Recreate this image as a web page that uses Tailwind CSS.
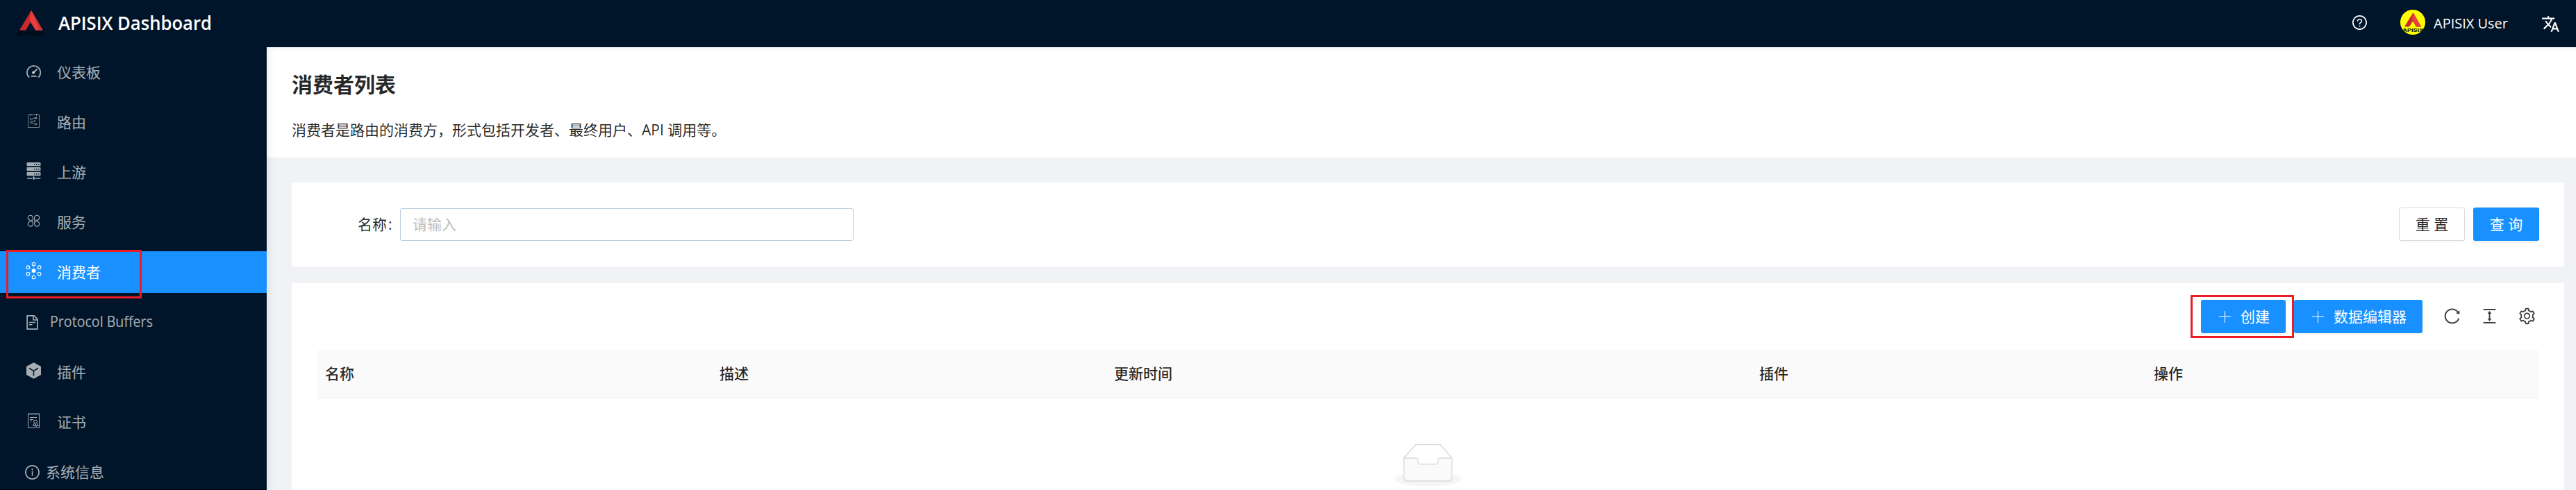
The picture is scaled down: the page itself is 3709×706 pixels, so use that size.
<!DOCTYPE html>
<html lang="zh-CN">
<head>
<meta charset="utf-8">
<title>APISIX Dashboard</title>
<script src="https://cdn.jsdelivr.net/npm/@tailwindcss/browser@4"></script>
</head>
<body class="relative flex h-[706px] w-[3709px] flex-col overflow-hidden bg-[#f0f2f5] font-['Open_Sans','Noto_Sans_CJK_SC',sans-serif] text-[21px] leading-[33px] text-black/85">

<header class="z-10 flex h-[68px] shrink-0 items-center bg-[#001529] text-white">
  <svg class="mb-[2px] ml-6 h-10 w-[42px] shrink-0" viewBox="0 0 42 40">
    <path d="M21 2L37.500 30.500H27L20 19L13 30.500H4z" fill="#c9292f"/>
    <path d="M21 2L37.500 30.500H27.500L18.500 15.500z" fill="#e8403a"/>
    <path d="M21 2L37.500 30.500H32z" fill="#d13438"/>
    <text x="1" y="37.500" font-family="Inter" font-weight="800" font-size="7" textLength="39" lengthAdjust="spacingAndGlyphs" fill="#03080f">APISIX</text>
  </svg>
  <svg class="ml-[18px] h-[68px] w-[230px]" viewBox="0 0 230 68"><text x="0" y="43" font-family="Open Sans" font-weight="600" font-size="26.500" textLength="221" lengthAdjust="spacingAndGlyphs" fill="#fff">APISIX Dashboard</text></svg>
  <div class="ml-auto flex items-center pr-[23px]">
    <svg class="mr-[48px] mb-[3px] size-[21px]" viewBox="64 64 896 896" fill="currentColor"><path d="M512 64C264.600 64 64 264.600 64 512s200.600 448 448 448 448-200.600 448-448S759.400 64 512 64zm0 820c-205.400 0-372-166.600-372-372s166.600-372 372-372 372 166.600 372 372-166.600 372-372 372z"/><path d="M623.600 316.700C593.600 290.400 554 276 512 276s-81.600 14.500-111.600 40.700C369.200 344 352 380.700 352 420v7.600c0 4.400 3.600 8 8 8h48c4.400 0 8-3.600 8-8V420c0-44.100 43.100-80 96-80s96 35.900 96 80c0 31.100-22 59.600-56.100 72.700-21.200 8.100-39.200 22.300-52.100 40.900-13.100 19-19.900 41.800-19.900 64.900V620c0 4.400 3.600 8 8 8h48c4.400 0 8-3.600 8-8v-22.700a48.300 48.300 0 0130.900-44.800c59-22.700 97.100-74.700 97.100-132.500.1-39.300-17.100-76-48.300-103.300zM472 732a40 40 0 1080 0 40 40 0 10-80 0z"/></svg>
    <svg class="mr-3 mb-1 size-9 rounded-full bg-[#ffff00]" viewBox="0 0 36 36">
      <path d="M18.500 4L30 24.500H23L18 16.500L13 24.500H6z" fill="#c9292f"/>
      <path d="M18.500 4L30 24.500H23.500L16.800 13.500z" fill="#e8403a"/>
      <text x="3" y="31.500" font-family="Inter" font-weight="800" font-size="6" textLength="31" lengthAdjust="spacingAndGlyphs" fill="#2b2b10">APISIX</text>
    </svg>
    <svg class="h-[68px] w-[110px]" viewBox="0 0 110 68"><text x="0" y="41" font-family="Open Sans" font-size="20.500" textLength="107" lengthAdjust="spacingAndGlyphs" fill="#fff">APISIX User</text></svg>
    <svg class="ml-[45px] size-[27px]" viewBox="0 0 24 24" fill="currentColor"><path d="M12.870 15.070l-2.540-2.510.03-.03c1.740-1.940 2.980-4.170 3.710-6.530H17V4h-7V2H8v2H1v1.990h11.170C11.500 7.920 10.440 9.750 9 11.350 8.070 10.320 7.300 9.190 6.690 8h-2c.73 1.630 1.730 3.170 2.980 4.560l-5.090 5.020L4 19l5-5 3.110 3.110.76-2.040zM18.500 10h-2L12 22h2l1.120-3h4.750L21 22h2l-4.500-12zm-2.620 7l1.620-4.330L19.120 17h-3.240z"/></svg>
  </div>
</header>

<div class="flex min-h-0 flex-1">
  <aside class="relative z-[5] w-96 shrink-0 overflow-hidden bg-[#001529] pt-1.5 text-white/65 shadow-[3px_0_12px_rgba(29,35,41,0.08)]">
    <nav class="flex flex-col gap-3 leading-[60px]">
      <a class="flex h-[60px] items-center pl-9">
        <svg class="mr-[21px] mb-1 h-[22px] w-[25px]" viewBox="0 0 25 22" fill="none" stroke="currentColor" stroke-width="1.800"><path d="M6.500 19.800H5.200A9.700 9.700 0 1 1 20 19.800H18.500"/><path d="M9 18.800h7.500" stroke-width="2"/><path d="M12 13.800L17.500 8.500" stroke-width="2"/><circle cx="12" cy="13.500" r="1.600" fill="currentColor" stroke-width="1"/></svg>仪表板</a>
      <a class="flex h-[60px] items-center pl-9">
        <svg class="mr-[21px] mb-1 h-[22px] w-[25px]" viewBox="0 0 25 22" fill="none" stroke="currentColor"><path d="M4.500 2.500H20.500V20.500H4.500z" stroke-opacity=".75"/><path d="M8.500 1v2.500M16.500 1v2.500"/><path d="M7.500 8.500H11L13 7H15.500M7.500 11.500H14M7.500 14H10.500L14 16H16" stroke-width=".9"/><path d="M15 6h2v2h-2zM13.500 10.500h1.600v1.600h-1.600zM15.500 15h1.600v1.800h-1.600zM7 7.500h1.300v1.600H7z" fill="currentColor" stroke="none"/></svg>路由</a>
      <a class="flex h-[60px] items-center pl-9">
        <svg class="mr-[21px] mb-[5px] h-[26px] w-[25px]" viewBox="0 0 25 26"><g fill="currentColor"><rect x="2.500" y="1" width="20" height="5.200" rx="1"/><rect x="2.500" y="8" width="20" height="5.200" rx="1"/><rect x="2.500" y="15" width="20" height="5.200" rx="1"/><path d="M3 23.200h7v1.500H3zM15 23.200h7.300v1.500H15zM12 20.200h1v2h-1zM11 22.200h3.200v3.200H11z"/></g><path d="M13 3h1.500v1.500H13zM16 3h1.500v1.500H16zM19 3h1.500v1.500H19zM13 10h1.500v1.500H13zM16 10h1.500v1.500H16zM19 10h1.500v1.500H19zM13 17h1.500v1.500H13zM16 17h1.500v1.500H16zM19 17h1.500v1.500H19z" fill="#001529"/></svg>上游</a>
      <a class="flex h-[60px] items-center pl-9">
        <svg class="mr-[21px] mb-1 h-[22px] w-[25px]" viewBox="0 0 25 22" fill="none" stroke="currentColor" stroke-width="1.150"><path d="M11.300 10.200H8.300A3.500 3.500 0 1 1 11.300 6.700z"/><path d="M13.700 10.200H16.700A3.500 3.500 0 1 0 13.700 6.700zM11.300 12.200H8.300A3.500 3.500 0 1 0 11.300 15.700zM13.700 12.200H16.700A3.500 3.500 0 1 1 13.700 15.700z"/></svg>服务</a>
      <a class="flex h-[60px] items-center bg-[#1890ff] pl-9 text-white">
        <svg class="mr-[21px] mb-1 h-[26px] w-[25px]" viewBox="0 0 25 26" fill="none" stroke="currentColor" stroke-width="1.100"><circle cx="12.500" cy="13" r="2.900" fill="currentColor" stroke="none"/><circle cx="12.500" cy="3.500" r="2.300"/><circle cx="12.500" cy="22.500" r="2.300"/><circle cx="4.300" cy="8.200" r="2.300"/><circle cx="20.700" cy="8.200" r="2.300"/><circle cx="4.300" cy="17.800" r="2.300"/><circle cx="20.700" cy="17.800" r="2.300"/><path d="M12.500 6V8M12.500 18v2M6.500 9.500L9 11M18.500 9.500L16 11M6.500 16.500L9 15M18.500 16.500L16 15" stroke-width=".7" stroke-opacity=".7"/></svg>消费者</a>
      <a class="flex h-[60px] items-center pl-9">
        <svg class="mr-[15px] size-[21px]" viewBox="64 64 896 896" fill="currentColor"><path d="M854.600 288.600L639.400 73.400c-6-6-14.100-9.400-22.600-9.400H192c-17.700 0-32 14.300-32 32v832c0 17.700 14.300 32 32 32h640c17.700 0 32-14.300 32-32V311.300c0-8.500-3.400-16.700-9.400-22.700zM790.200 326H602V137.800L790.200 326zm1.800 562H232V136h302v216a42 42 0 0042 42h216v494zM504 618H320c-4.400 0-8 3.600-8 8v48c0 4.400 3.600 8 8 8h184c4.400 0 8-3.600 8-8v-48c0-4.400-3.600-8-8-8zM312 490v48c0 4.400 3.600 8 8 8h384c4.400 0 8-3.600 8-8v-48c0-4.400-3.600-8-8-8H320c-4.400 0-8 3.600-8 8z"/></svg>
        <svg class="h-[60px] w-[160px]" viewBox="0 0 160 60" fill="currentColor"><text x="0" y="37" font-family="Open Sans" font-size="21" textLength="148" lengthAdjust="spacingAndGlyphs">Protocol Buffers</text></svg></a>
      <a class="flex h-[60px] items-center pl-9">
        <svg class="mr-[21px] mb-1 h-[26px] w-[25px]" viewBox="0 0 25 26"><path d="M12.500 1.200L23 7V19L12.500 24.800L2 19V7z" fill="currentColor" stroke-linejoin="round"/><path d="M6 9.500L12.500 13.300L19 9.500M12.500 13.300V20.500" fill="none" stroke="#001529" stroke-width="1.500"/></svg>插件</a>
      <a class="flex h-[60px] items-center pl-9">
        <svg class="mr-[21px] mb-[5px] h-[22px] w-[25px]" viewBox="0 0 25 22" fill="none" stroke="currentColor"><path d="M4.500 1H20.500V21.300H4.500z"/><path d="M5 2h15" stroke-opacity=".5"/><path d="M7 6.500H17M7 9.500H12M7 11.500H10"/><circle cx="15" cy="12.500" r="2.400"/><path d="M13.500 14.500L11.500 18.500L13.500 18L14.500 19.500L15.300 16L16.500 19.500L17.500 18L19.300 18.500L17 14.500"/></svg>证书</a>
      <a class="flex h-[60px] items-center pl-9">
        <svg class="mr-[9px] size-[21px]" viewBox="64 64 896 896" fill="currentColor"><path d="M512 64C264.600 64 64 264.600 64 512s200.600 448 448 448 448-200.600 448-448S759.400 64 512 64zm0 820c-205.400 0-372-166.600-372-372s166.600-372 372-372 372 166.600 372 372-166.600 372-372 372z"/><path d="M464 336a48 48 0 1096 0 48 48 0 10-96 0zm72 112h-48c-4.400 0-8 3.600-8 8v272c0 4.400 3.600 8 8 8h48c4.400 0 8-3.600 8-8V456c0-4.400-3.600-8-8-8z"/></svg>系统信息</a>
    </nav>
    <div class="absolute inset-x-0 bottom-0 h-px bg-black/50"></div>
  </aside>

  <main class="flex min-w-0 flex-1 flex-col">
    <div class="h-[159px] shrink-0 bg-white pl-9 shadow-[inset_0_6px_6px_-5px_rgba(0,21,41,0.08)]">
      <h1 class="pt-[30px] text-[30px] leading-[48px] font-bold">消费者列表</h1>
      <p class="pt-[25px] leading-[33px]">消费者是路由的消费方，形式包括开发者、最终用户、API 调用等。</p>
    </div>

    <section class="mt-9 mr-[17px] ml-9 flex h-[121px] shrink-0 items-start bg-white pt-9 pr-9 pl-[95px]">
      <label class="w-[61px] leading-[49px] whitespace-nowrap">名称<span class="ml-[2px]">:</span></label>
      <div class="mt-px flex h-[47px] w-[653px] items-center rounded-[3px] border border-[#b9cfe2] pl-[17px] text-[#bfbfbf]">请输入</div>
      <div class="ml-auto flex gap-3">
        <button class="flex h-12 w-[95px] items-center justify-center rounded-[3px] border border-[#d9d9d9] shadow-[0_3px_0_rgba(0,0,0,0.02)]">重 置</button>
        <button class="flex h-12 w-[95px] items-center justify-center rounded-[3px] bg-[#1890ff] text-white shadow-[0_3px_0_rgba(0,0,0,0.045)]">查 询</button>
      </div>
    </section>

    <section class="mt-6 mr-[17px] ml-9 flex-1 rounded-t-[3px] bg-white px-9">
      <div class="flex h-24 items-center justify-end">
        <div class="relative">
          <button class="flex h-12 w-[122px] items-center rounded-[3px] bg-[#1890ff] pl-[26px] text-white shadow-[0_3px_0_rgba(0,0,0,0.045)]"><svg class="mr-[14px] size-[17px]" viewBox="0 0 17 17" stroke="currentColor" stroke-width="1.100"><path d="M8.500 0V17M0 8.500H17"/></svg>创建</button>
          <div class="absolute top-[-7px] left-[-15px] h-[62px] w-[149px] border-[3px] border-[#ed1c24]"></div>
        </div>
        <button class="ml-3 flex h-12 w-[185px] items-center rounded-[3px] bg-[#1890ff] pl-[26px] text-white shadow-[0_3px_0_rgba(0,0,0,0.045)]"><svg class="mr-[14px] size-[17px]" viewBox="0 0 17 17" stroke="currentColor" stroke-width="1.100"><path d="M8.500 0V17M0 8.500H17"/></svg>数据编辑器</button>
        <div class="mr-[4.5px] mb-[2px] ml-[28.5px] flex gap-[27px] text-black/75">
          <svg class="size-[27px]" viewBox="0 0 1024 1024" fill="currentColor"><path d="M909.100 209.300l-56.400 44.100C775.800 155.100 656.200 92 521.900 92 290 92 102.300 279.500 102 511.500 101.700 743.700 289.800 932 521.900 932c181.300 0 335.800-115 394.600-276.100 1.500-4.200-.7-8.900-4.900-10.300l-56.700-19.500a8 8 0 00-10.100 4.800c-1.800 5-3.800 10-5.900 14.900-17.300 41-42.100 77.800-73.700 109.400A344.770 344.770 0 01655.900 829c-42.300 17.900-87.400 27-133.800 27-46.500 0-91.500-9.100-133.800-27A341.500 341.500 0 01279 755.200a342.160 342.160 0 01-73.700-109.400c-17.900-42.400-27-87.400-27-133.900s9.100-91.500 27-133.900c17.300-41 42.100-77.800 73.700-109.400 31.600-31.600 68.400-56.400 109.300-73.800 42.300-17.900 87.400-27 133.800-27 46.500 0 91.500 9.100 133.800 27a341.500 341.500 0 01109.300 73.800c9.900 9.900 19.200 20.400 27.800 31.400l-60.200 47a8 8 0 003 14.100l175.600 43c5 1.200 9.900-2.600 9.900-7.700l.8-180.900c-.1-6.600-7.800-10.300-13-6.200z"/></svg>
          <svg class="size-[27px]" viewBox="0 0 1024 1024" fill="currentColor"><path d="M840 836H184c-4.400 0-8 3.600-8 8v60c0 4.400 3.600 8 8 8h656c4.400 0 8-3.600 8-8v-60c0-4.400-3.600-8-8-8zm0-724H184c-4.400 0-8 3.600-8 8v60c0 4.400 3.600 8 8 8h656c4.400 0 8-3.600 8-8v-60c0-4.400-3.600-8-8-8zM610.800 378c6 0 9.400-7 5.700-11.700L515.700 238.700a7.140 7.140 0 00-11.300 0L403.600 366.300a7.230 7.230 0 005.700 11.700H476v268h-62.800c-6 0-9.400 7-5.700 11.700l100.800 127.500c2.900 3.700 8.500 3.700 11.300 0l100.800-127.500c3.700-4.700.4-11.700-5.700-11.700H548V378h62.800z"/></svg>
          <svg class="size-[27px]" viewBox="0 0 1024 1024" fill="currentColor"><path d="M924.800 625.700l-65.500-56c3.100-19 4.700-38.400 4.700-57.800s-1.600-38.800-4.700-57.800l65.500-56a32.030 32.030 0 009.300-35.200l-.9-2.600a443.740 443.740 0 00-79.700-137.900l-1.800-2.100a32.120 32.120 0 00-35.100-9.500l-81.300 28.900c-30-24.600-63.500-44-99.700-57.600l-15.700-85a32.050 32.050 0 00-25.800-25.700l-2.700-.5c-52.100-9.400-106.900-9.400-159 0l-2.700.5a32.050 32.050 0 00-25.800 25.700l-15.800 85.400a351.860 351.860 0 00-99 57.400l-81.900-29.100a32 32 0 00-35.100 9.500l-1.800 2.100a446.020 446.020 0 00-79.700 137.900l-.9 2.600c-4.500 12.500-.8 26.500 9.300 35.200l66.300 56.600c-3.100 18.800-4.600 38-4.600 57.100 0 19.200 1.500 38.400 4.600 57.100L99 625.500a32.030 32.030 0 00-9.300 35.200l.9 2.600c18.100 50.400 44.900 96.900 79.700 137.900l1.800 2.100a32.120 32.120 0 0035.100 9.500l81.900-29.100c29.800 24.500 63.100 43.900 99 57.400l15.800 85.400a32.050 32.050 0 0025.800 25.700l2.700.5a449.400 449.400 0 00159 0l2.700-.5a32.050 32.050 0 0025.800-25.700l15.700-85a350 350 0 0099.700-57.600l81.300 28.900a32 32 0 0035.100-9.500l1.800-2.100c34.800-41.100 61.600-87.500 79.700-137.900l.9-2.600c4.500-12.300.8-26.300-9.300-35zM788.300 465.900c2.500 15.100 3.800 30.600 3.800 46.100s-1.300 31-3.800 46.100l-6.600 40.100 74.700 63.900a370.030 370.030 0 01-42.600 73.600L721 702.800l-31.400 25.800c-23.900 19.600-50.500 35-79.300 45.800l-38.100 14.300-17.900 97a377.500 377.500 0 01-85 0l-17.900-97.200-37.800-14.500c-28.500-10.800-55-26.200-78.700-45.700l-31.400-25.900-93.400 33.200c-17-22.900-31.200-47.600-42.600-73.600l75.500-64.500-6.500-40c-2.400-14.900-3.700-30.300-3.700-45.500 0-15.300 1.200-30.600 3.700-45.500l6.500-40-75.500-64.500c11.300-26.100 25.600-50.700 42.600-73.600l93.400 33.200 31.400-25.900c23.700-19.500 50.200-34.900 78.700-45.700l37.900-14.300 17.900-97.200c28.100-3.200 56.800-3.200 85 0l17.900 97 38.100 14.300c28.700 10.800 55.400 26.200 79.300 45.800l31.400 25.800 92.800-32.900c17 22.900 31.200 47.600 42.600 73.600L781.800 426l6.500 39.900zM512 326c-97.200 0-176 78.800-176 176s78.800 176 176 176 176-78.800 176-176-78.800-176-176-176zm79.200 255.200A111.600 111.600 0 01512 614c-29.900 0-58-11.700-79.200-32.800A111.600 111.600 0 01400 502c0-29.900 11.700-58 32.800-79.200C454 401.600 482.100 390 512 390c29.900 0 58 11.600 79.200 32.800A111.600 111.600 0 01624 502c0 29.900-11.700 58-32.800 79.200z"/></svg>
        </div>
      </div>
      <div class="grid h-[70px] grid-cols-[568px_568px_929px_568px_1fr] items-center rounded-t-[3px] border-b border-[#f0f0f0] bg-[#fafafa] font-medium *:pl-3">
        <div>名称</div><div>描述</div><div>更新时间</div><div>插件</div><div>操作</div>
      </div>
      <div class="flex justify-center pt-[65px]">
        <svg class="h-[61.5px] w-24" viewBox="0 0 64 41"><g transform="translate(0 1)" fill="none"><ellipse fill="#F5F5F5" cx="32" cy="33" rx="32" ry="7"/><g stroke="#D9D9D9"><path d="M55 12.760L44.854 1.258C44.367.474 43.656 0 42.907 0H21.093c-.749 0-1.460.474-1.947 1.257L9 12.761V22h46v-9.240z"/><path fill="#FAFAFA" d="M41.613 15.931c0-1.605.994-2.930 2.227-2.931H55v18.137C55 33.260 53.680 35 52.050 35h-40.100C10.320 35 9 33.259 9 31.137V13h11.160c1.233 0 2.227 1.323 2.227 2.928v.022c0 1.605 1.005 2.901 2.237 2.901h14.752c1.232 0 2.237-1.308 2.237-2.913v-.007z"/></g></g></svg>
      </div>
    </section>
  </main>
</div>

<!-- highlight frame over the selected menu entry -->
<div class="absolute top-[360px] left-[9px] z-20 h-[70px] w-[195px] border-[3px] border-[#ed1c24]"></div>
</body>
</html>
